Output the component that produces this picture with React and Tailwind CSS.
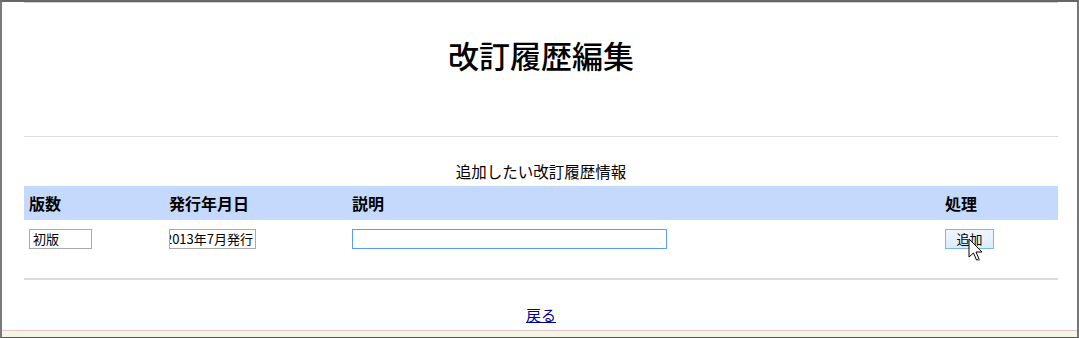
import React from 'react';

const jp = { fontFamily: '"Noto Sans CJK JP", "Noto Sans", sans-serif' };

function Cursor() {
  return (
    <svg className="absolute left-[966px] top-[236px]" width="16" height="26" viewBox="0 0 16 26">
      <path d="M1 1 L1 19 L5.5 15 L8.5 22 L11 21 L8 14 L14 14 Z" fill="#fff" stroke="#000" strokeWidth="1" strokeLinejoin="round" />
      <path d="M9.5 22.5 L12 21.5" stroke="#999" strokeWidth="1.5" />
    </svg>
  );
}

function App() {
  return (
    <div className="relative w-[1079px] h-[338px] bg-white border-l-2 border-t-2 border-r-2 border-b border-l-[#7a7a7a] border-t-[#666] border-r-[#777] border-b-[#555] flex flex-col overflow-hidden" style={jp}>
      <div className="flex-1 pl-[22px] pr-[19px]">
        <div className="h-px bg-[#d0d0d0]" />
        <h1 className="text-center text-[31px] font-medium text-black leading-none pt-[36px] pb-[66px]">改訂履歴編集</h1>
        <div className="h-px bg-[#dedede]" />
        <p className="text-center text-[15.5px] text-black leading-none pt-[27px] pb-[6px]">追加したい改訂履歴情報</p>

        <div className="grid grid-cols-[140px_183px_593px_1fr] bg-[#c5d9fc] h-[34px] items-center text-[16px] font-bold text-black">
          <div className="pl-[5px]">版数</div>
          <div className="pl-[5px]">発行年月日</div>
          <div className="pl-[5px]">説明</div>
          <div className="pl-[5px]">処理</div>
        </div>

        <div className="grid grid-cols-[140px_183px_593px_1fr] items-center pt-[9px] pb-[29px] text-[13px]">
          <div className="pl-[5px]">
            <input readOnly value="初版" className="w-[63px] h-[20px] border border-[#a9a9a9] px-[3px] text-[13px] outline-none" />
          </div>
          <div className="pl-[5px]">
            <div className="w-[87px] h-[20px] border border-[#a9a9a9] flex items-center justify-end overflow-hidden whitespace-nowrap pr-[2px] text-[13px] leading-none">
              2013年7月発行
            </div>
          </div>
          <div className="pl-[5px]">
            <input readOnly value="" className="w-[315px] h-[20px] border border-[#5a9fe6] outline-none" />
          </div>
          <div className="pl-[5px]">
            <button className="w-[49px] h-[20px] border border-[#7eb4ea] bg-gradient-to-b from-[#eef6fd] to-[#dcecfc] text-[13px] leading-none text-black">追加</button>
          </div>
        </div>

        <div className="h-[2px] bg-[#dcdcdc]" />
        <div className="text-center pt-[22px]">
          <a href="#" className="text-[15px] text-[#00009c] underline leading-none">戻る</a>
        </div>
      </div>
      <div className="h-px bg-[#e6c6cc]" />
      <div className="h-[6px] bg-[#f4f5e3]" />
      <Cursor />
    </div>
  );
}

export default App;
